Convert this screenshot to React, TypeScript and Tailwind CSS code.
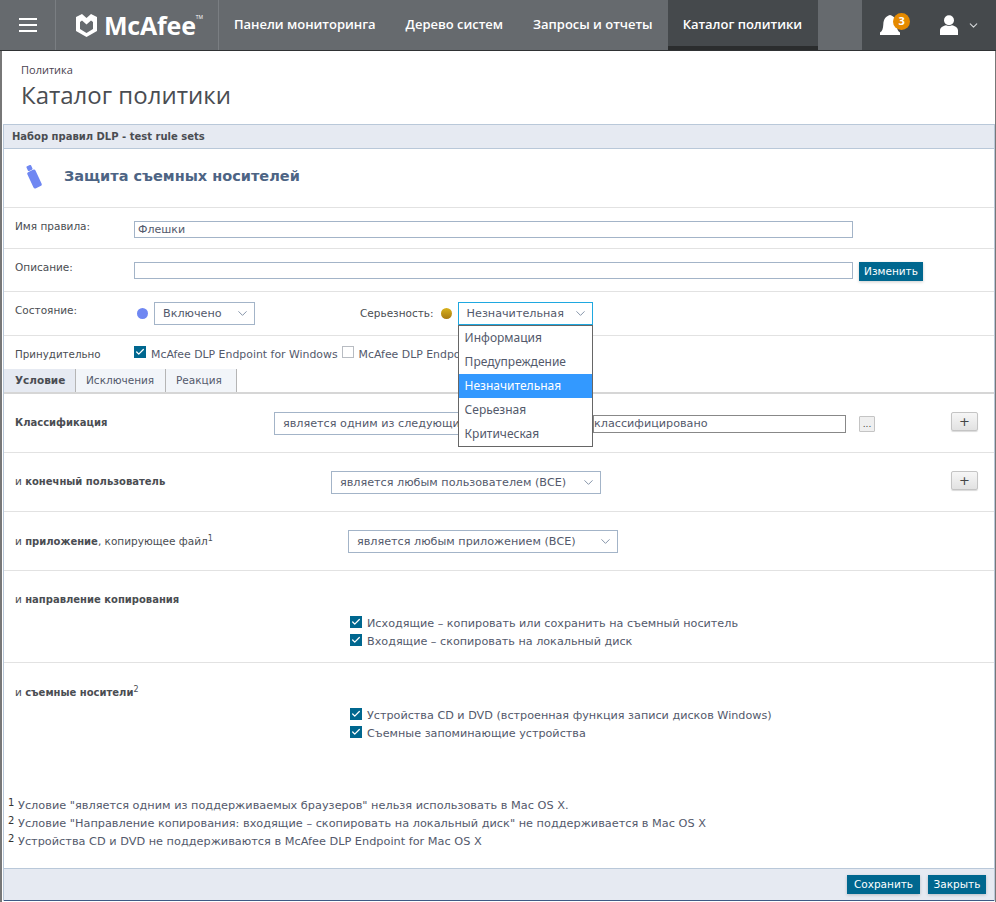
import { Check, ChevronDown } from 'lucide-react';
import type { ReactNode } from 'react';

const verdana = { fontFamily: '"DejaVu Sans", Verdana, sans-serif' };

function McAfeeLogo() {
  return (
    <svg width="21" height="23" viewBox="0 0 21 23" fill="white" aria-hidden="true">
      <path d="M0 3 L6 0 L10.5 4 L15 0 L21 3 V17 L10.5 23 L0 17 Z M4 8 V15 L10.5 19 L17 15 V8 L15 6.5 L10.5 10.5 L6 6.5 Z" fillRule="evenodd" />
    </svg>
  );
}

function NavItem({ label, active }: { label: string; active?: boolean }) {
  return (
    <div
      className={
        active
          ? 'flex h-[50px] items-center border-b-[4px] border-[#2b2d2e] bg-[#45494c] pt-[4px] pr-[16px] pl-[15px] text-[13px] font-semibold tracking-[-0.02px] text-white'
          : 'flex h-[50px] items-center px-[15px] text-[13px] font-semibold tracking-[-0.02px] text-white'
      }
    >
      {label}
    </div>
  );
}

function Checked({ children }: { children: ReactNode }) {
  return (
    <label className="flex h-[18px] items-center gap-[4px] text-[11.2px] text-[#53596b]">
      <span className="-mt-[5px] flex h-[12px] w-[12px] items-center justify-center bg-[#00678f]">
        <Check size={10} color="white" strokeWidth={3} />
      </span>
      <span className="ml-[1px]">{children}</span>
    </label>
  );
}

function FakeSelect({ value, width, focused }: { value: string; width: string; focused?: boolean }) {
  return (
    <div
      className={`flex h-[23px] items-center justify-between border bg-white pl-[8px] pr-[4px] text-[11.2px] text-[#53596b] ${width} ${
        focused ? 'border-[#1fa8e0]' : 'border-[#a3b4c8]'
      }`}
    >
      <span className="pt-[2px]">{value}</span>
      <ChevronDown size={15} color="#7d8da3" strokeWidth={1.5} />
    </div>
  );
}

function PlusButton() {
  return (
    <div className="flex h-[19px] w-[27px] items-center justify-center rounded-[2px] border border-[#c4c4c4] bg-gradient-to-b from-[#f6f6f6] to-[#e2e2e2] text-[13px] leading-none text-[#444] shadow-[0_1px_1px_rgba(0,0,0,0.15)]">
      +
    </div>
  );
}

function TealButton({ label, className }: { label: string; className: string }) {
  return (
    <div className={`flex h-[19px] items-center justify-center bg-[#00678f] text-[10.5px] text-white shadow-[0_1px_3px_rgba(0,0,0,0.2)] ${className}`}>
      {label}
    </div>
  );
}

const severities = ['Информация', 'Предупреждение', 'Незначительная', 'Серьезная', 'Критическая'];

const footnotes = [
  ['1', 'Условие "является одним из поддерживаемых браузеров" нельзя использовать в Mac OS X.'],
  ['2', 'Условие "Направление копирования: входящие – скопировать на локальный диск" не поддерживается в Mac OS X'],
  ['2', 'Устройства CD и DVD не поддерживаются в McAfee DLP Endpoint for Mac OS X'],
];

export default function App() {
  return (
    <div className="h-[902px] w-[996px] overflow-hidden bg-white" style={verdana}>
      <header className="flex h-[51px] border-b border-[#2f3234] bg-[#666a6e]" style={{ fontFamily: '"Open Sans", sans-serif' }}>
        <div className="flex w-[56px] flex-col items-center justify-center gap-[4px] border-r border-[#7a7e82]">
          <span className="h-[2px] w-[18px] bg-white" />
          <span className="h-[2px] w-[18px] bg-white" />
          <span className="h-[2px] w-[18px] bg-white" />
        </div>
        <div className="flex w-[163px] items-center gap-[7px] border-r border-[#7a7e82] pl-[20px]">
          <McAfeeLogo />
          <span className="text-[25px] leading-none font-bold tracking-[-0.2px] text-white">McAfee</span>
          <span className="-mt-[14px] -ml-[7px] text-[5px] text-white">TM</span>
        </div>
        <nav className="flex">
          <NavItem label="Панели мониторинга" />
          <NavItem label="Дерево систем" />
          <NavItem label="Запросы и отчеты" />
          <NavItem label="Каталог политики" active />
        </nav>
        <div className="ml-[44px] flex flex-1 bg-[#45494c]">
          <div className="relative flex w-[72px] items-center pl-[18px]">
            <svg width="20" height="20" viewBox="0 0 20 20" fill="white" aria-hidden="true">
              <path d="M0 20 V17.5 C2.5 16 3 13.5 3.3 9.5 C3.6 4 6 1 10 0 C14 1 16.4 4 16.7 9.5 C17 13.5 17.5 16 20 17.5 V20 Z" />
            </svg>
            <span className="absolute top-[13px] left-[31px] flex h-[17px] w-[17px] items-center justify-center rounded-full bg-[#e58a00] text-[11px] font-bold text-white">
              3
            </span>
          </div>
          <div className="flex items-center gap-[9px] pl-[6px]">
            <svg width="18" height="20" viewBox="0 0 18 20" fill="white" aria-hidden="true">
              <circle cx="9" cy="5.2" r="5" />
              <path d="M0 20 V15.5 C0 12.5 3 11 6 10.2 C8 11.2 10 11.2 12 10.2 C15 11 18 12.5 18 15.5 V20 Z" />
            </svg>
            <ChevronDown size={13} color="#d5d7d9" />
          </div>
        </div>
      </header>

      <div className="h-[851px] border-x border-l-[2px] border-[#777] pl-[1px]">
        <div className="h-[73px] pl-[18px]" style={{ fontFamily: '"Open Sans", sans-serif' }}>
          <div className="pt-[11px] text-[11px] leading-[16px] text-[#4a4350]">Политика</div>
          <h1 className="text-[24px] leading-[33px] text-[#4a4d52]">Каталог политики</h1>
        </div>

        <div className="border-x border-[#b9c8d9]">
          <div className="flex h-[25px] items-center border-y border-[#b9c8d9] bg-[#e6eaf2] pl-[8px] text-[10px] font-bold text-[#4a4d52]">
            Набор правил DLP - test rule sets
          </div>

          <div className="flex h-[59px] items-center border-b border-[#e2e2e2] pb-[2px] pl-[21px]">
            <svg width="20" height="24" viewBox="0 0 20 24" aria-hidden="true">
              <rect x="2" y="0.5" width="5" height="5" rx="1" fill="#6f87f2" transform="rotate(-25 4.5 3)" />
              <rect x="5" y="5" width="9" height="18" rx="2" fill="#6f87f2" transform="rotate(-25 9.5 14)" />
            </svg>
            <h2 className="ml-[19px] text-[14.5px] font-bold text-[#4d6484]">Защита съемных носителей</h2>
          </div>

          <div className="flex h-[41px] border-b border-[#e2e2e2] pl-[11px] text-[10.5px] text-[#4a4d52]">
            <span className="w-[119px] pt-[11px]">Имя правила:</span>
            <div className="mt-[13px] flex h-[17px] w-[719px] items-center border border-[#a3b4c8] pt-[1px] pl-[3px] text-[11px] text-[#53596b]">Флешки</div>
          </div>

          <div className="flex h-[43px] border-b border-[#e2e2e2] pl-[11px] text-[10.5px] text-[#4a4d52]">
            <span className="w-[119px] pt-[11px]">Описание:</span>
            <div className="mt-[13px] h-[17px] w-[719px] border border-[#a3b4c8]" />
            <TealButton label="Изменить" className="mt-[13px] ml-[6px] w-[64px]" />
          </div>

          <div className="flex h-[44px] border-b border-[#e2e2e2] pl-[11px] text-[10.5px] text-[#4a4d52]">
            <span className="w-[122px] pt-[11px]">Состояние:</span>
            <span className="mt-[16px] h-[11px] w-[11px] rounded-full bg-[#6f87f2]" />
            <div className="mt-[10px] ml-[6px]">
              <FakeSelect value="Включено" width="w-[101px]" />
            </div>
            <span className="ml-[105px] pt-[14px]">Серьезность:</span>
            <span className="mt-[16px] ml-[7px] h-[11px] w-[11px] rounded-full bg-gradient-to-b from-[#d8b21c] to-[#a87a10]" />
            <div className="relative mt-[10px] ml-[6px]">
              <FakeSelect value="Незначительная" width="w-[135px]" focused />
              <ul
                className="absolute top-[23px] left-0 z-10 w-[135px] border border-[#666] bg-white text-[12px] text-[#53596b]"
                style={{ fontFamily: '"Noto Sans", sans-serif' }}
              >
                {severities.map((item) => (
                  <li
                    key={item}
                    className={
                      item === 'Незначительная'
                        ? 'flex h-[24px] items-center bg-[#3399ff] pl-[6px] text-white'
                        : 'flex h-[24px] items-center pl-[6px]'
                    }
                  >
                    {item}
                  </li>
                ))}
              </ul>
            </div>
          </div>

          <div className="flex h-[33px] pl-[11px] text-[10.9px] text-[#53596b]">
            <span className="w-[119px] pt-[11px] text-[10.3px] text-[#4a4d52]">Принудительно</span>
            <div className="mt-[9px] flex h-[14px] items-start">
              <span className="mt-[1px] flex h-[12px] w-[12px] items-center justify-center bg-[#00678f]">
                <Check size={10} color="white" strokeWidth={3} />
              </span>
              <span className="ml-[5px] pt-[2px]">McAfee DLP Endpoint for Windows</span>
              <span className="mt-[1px] ml-[4px] h-[12px] w-[12px] border border-[#b8bcc2]" />
              <span className="ml-[5px] pt-[2px]">McAfee DLP Endpoint for Mac OS X</span>
            </div>
          </div>

          <div className="flex h-[25px] border-b-2 border-[#d6d6d6] text-[10.5px] text-[#53596b]">
            <div className="flex w-[72px] items-center border-r border-[#b5b5b5] bg-[#e6eaf2] pt-[1px] pl-[11px] font-bold text-[#4a4d52]">Условие</div>
            <div className="flex w-[90px] items-center border-r border-[#b5b5b5] bg-[#f2f5f9] pt-[1px] pl-[10px]">Исключения</div>
            <div className="flex w-[71px] items-center border-r border-[#b5b5b5] bg-[#f2f5f9] pt-[1px] pl-[10px]">Реакция</div>
          </div>

          <div className="flex h-[59px] border-b border-[#e2e2e2] pl-[11px] text-[10px] text-[#4a4d52]">
            <b className="w-[259px] pt-[21px]">Классификация</b>
            <div className="mt-[18px] flex h-[23px] w-[184px] items-center overflow-hidden border-y border-l border-[#a3b4c8] pl-[8px] text-[11.2px] whitespace-nowrap text-[#53596b]">
              <span className="pt-[2px]">является одним из следующих</span>
            </div>
            <div className="mt-[21px] ml-[135px] flex h-[18px] w-[253px] items-center border border-[#888] text-[11.2px] text-[#53596b]">
              классифицировано
            </div>
            <div className="mt-[22px] ml-[13px] flex h-[16px] w-[16px] items-center justify-center rounded-[1px] border border-[#c4c4c4] bg-[#efefef] text-[9px] leading-none text-[#444]">...</div>
            <div className="mt-[18px] ml-[76px]">
              <PlusButton />
            </div>
          </div>

          <div className="flex h-[59px] border-b border-[#e2e2e2] pl-[11px] text-[10.5px] text-[#4a4d52]">
            <span className="w-[316px] pt-[21px]">
              и <b className="text-[10px]">конечный пользователь</b>
            </span>
            <div className="mt-[18px]">
              <FakeSelect value="является любым пользователем (ВСЕ)" width="w-[270px]" />
            </div>
            <div className="mt-[18px] ml-[350px]">
              <PlusButton />
            </div>
          </div>

          <div className="flex h-[59px] border-b border-[#e2e2e2] pl-[11px] text-[10.5px] text-[#4a4d52]">
            <span className="w-[333px] pt-[22px]">
              и <b className="text-[10px]">приложение</b>, копирующее файл<sup className="text-[8px]">1</sup>
            </span>
            <div className="mt-[18px]">
              <FakeSelect value="является любым приложением (ВСЕ)" width="w-[270px]" />
            </div>
          </div>

          <div className="h-[92px] border-b border-[#e2e2e2] pt-[21px] pl-[11px] text-[10.5px] text-[#4a4d52]">
            <div>
              и <b className="text-[10px]">направление копирования</b>
            </div>
            <div className="mt-[8px] ml-[335px]">
              <Checked>Исходящие – копировать или сохранить на съемный носитель</Checked>
              <Checked>Входящие – скопировать на локальный диск</Checked>
            </div>
          </div>

          <div className="h-[110px] pt-[22px] pl-[11px] text-[10.5px] text-[#4a4d52]">
            <div>
              и <b className="text-[10px]">съемные носители</b>
              <sup className="text-[8px]">2</sup>
            </div>
            <div className="mt-[7px] ml-[335px]">
              <Checked>Устройства CD и DVD (встроенная функция записи дисков Windows)</Checked>
              <Checked>Съемные запоминающие устройства</Checked>
            </div>
          </div>

          <div className="h-[95px] pt-[24px] pl-[4px] text-[11.3px] leading-[18px] text-[#53596b]">
            {footnotes.map(([mark, text]) => (
              <div key={text} className="flex items-start">
                <span className="-mt-[3px] w-[10px] text-[10px] text-[#333]">{mark}</span>
                <span>{text}</span>
              </div>
            ))}
          </div>

          <div className="flex h-[33px] items-center justify-end gap-[8px] border-t border-b border-t-[#b9c8d9] border-b-[#3f5a85] bg-[#e6eaf2] pr-[8px]">
            <TealButton label="Сохранить" className="w-[73px]" />
            <TealButton label="Закрыть" className="w-[58px]" />
          </div>
        </div>
      </div>
    </div>
  );
}
